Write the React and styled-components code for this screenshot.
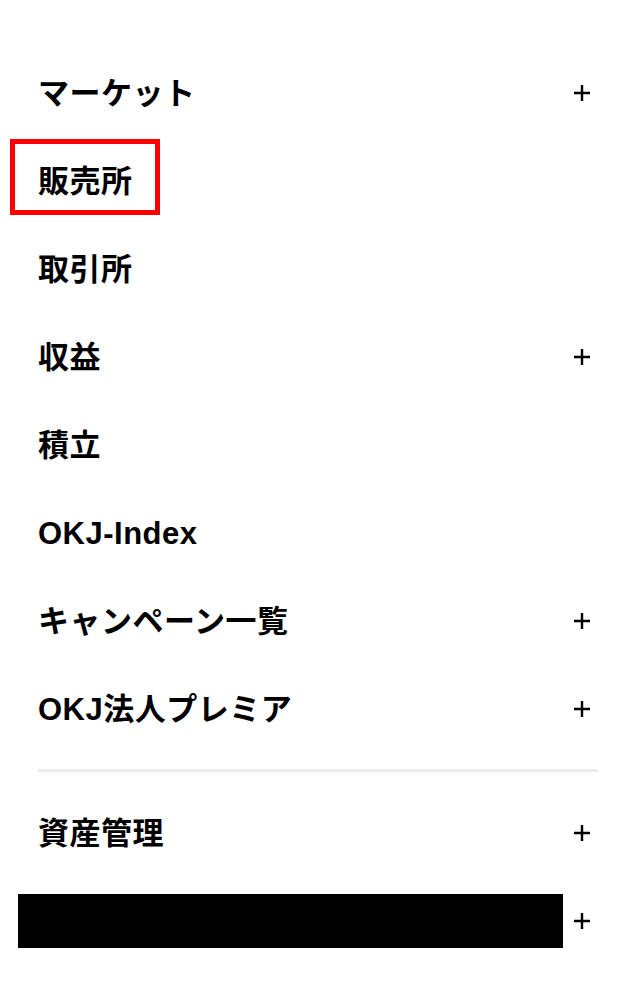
import React from 'react';
import styled, { createGlobalStyle } from 'styled-components';

const GlobalStyle = createGlobalStyle`
  html, body {
    margin: 0;
    padding: 0;
    background: #fff;
  }
  body {
    font-family: "Liberation Sans", "Noto Sans CJK JP", sans-serif;
    color: #000;
  }
`;

const Menu = styled.nav`
  padding: 49px 29px 40px 38px;
  width: 620px;
  box-sizing: border-box;
`;

const List = styled.ul`
  list-style: none;
  margin: 0;
  padding: 0;
`;

const Row = styled.li`
  display: flex;
  align-items: center;
  justify-content: space-between;
  height: 88px;
`;

const Label = styled.span`
  position: relative;
  font-size: 31px;
  font-weight: 700;
  letter-spacing: 0.5px;
  line-height: 1;

  ${({ $marked }) => $marked && `
    &::after {
      content: '';
      position: absolute;
      left: -28px;
      top: -27px;
      width: 140px;
      height: 66px;
      border: 5px solid #ff0000;
    }
  `}
`;

const Redacted = styled.span`
  display: block;
  width: 545px;
  height: 54px;
  margin-left: -20px;
  background: #000;
`;

const Divider = styled.hr`
  border: 0;
  height: 3px;
  margin: 16px -7px 17px 0;
  background: #ececec;
`;

const PlusIcon = () => (
  <svg width="18" height="18" viewBox="0 0 18 18" aria-hidden="true">
    <path d="M9 1v16M1 9h16" stroke="#000" strokeWidth="2.4" fill="none" />
  </svg>
);

const mainItems = [
  { label: 'マーケット', expandable: true },
  { label: '販売所', marked: true },
  { label: '取引所' },
  { label: '収益', expandable: true },
  { label: '積立' },
  { label: 'OKJ-Index' },
  { label: 'キャンペーン一覧', expandable: true },
  { label: 'OKJ法人プレミア', expandable: true },
];

const MenuRow = ({ item }) => (
  <Row>
    {item.redacted ? <Redacted /> : <Label $marked={item.marked}>{item.label}</Label>}
    {item.expandable && <PlusIcon />}
  </Row>
);

export default function App() {
  return (
    <>
      <GlobalStyle />
      <Menu>
        <List>
          {mainItems.map(item => <MenuRow key={item.label} item={item} />)}
        </List>
        <Divider />
        <List>
          <MenuRow item={{ label: '資産管理', expandable: true }} />
          <MenuRow item={{ label: 'account', expandable: true, redacted: true }} />
        </List>
      </Menu>
    </>
  );
}
